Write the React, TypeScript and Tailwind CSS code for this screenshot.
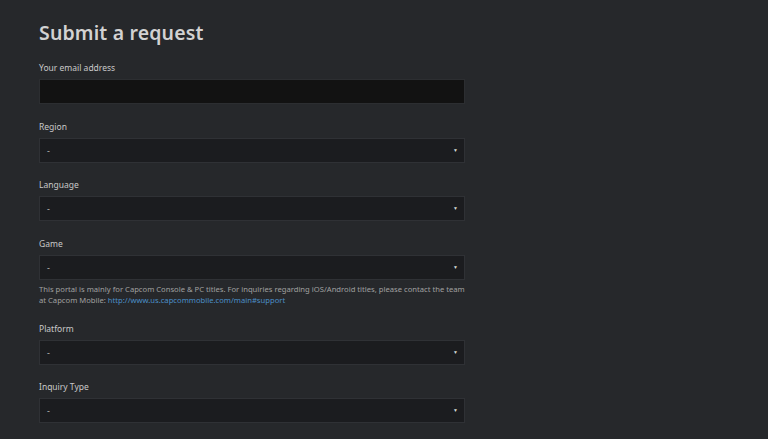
const fields = [
    { label: 'Region' },
    { label: 'Language' },
    { label: 'Game', note: true },
    { label: 'Platform' },
    { label: 'Inquiry Type' },
];

const SelectBox = () => (
    <div className="h-[25px] w-full bg-[#1b1c1f] border border-[#2f3135] flex items-center justify-between pl-[7px] pr-[6px]">
        <span className="text-[9px] text-[#bdbdbd] leading-none">-</span>
        <span className="text-[5px] text-[#d6d6d6] leading-none">▼</span>
    </div>
);

const App = () => {
    return (
        <div className="min-h-screen w-full bg-[#26282b] font-['Noto_Sans',sans-serif] text-[#c9c9c9]">
            <div className="w-[426px] ml-[39px] pt-[19px]">
                <h1 className="text-[19.5px] font-semibold text-[#d2d2d2] leading-[28px] tracking-[0.15px]">Submit a request</h1>

                {/* Email */}
                <div className="mt-[15px]">
                    <label className="block text-[8.5px] leading-[12px]">Your email address</label>
                    <div className="mt-[5px] h-[25px] w-full bg-[#121212] border border-[#2c2e31]" />
                </div>

                {fields.map((f) => (
                    <div key={f.label} className={f.label === 'Platform' ? 'mt-[17px]' : 'mt-[16.5px]'}>
                        <label className="block text-[8.5px] leading-[12px]">{f.label}</label>
                        <div className="mt-[5px]">
                            <SelectBox />
                        </div>
                        {f.note && (
                            <p className="mt-[4px] text-[7.65px] leading-[11px] text-[#a0a0a0] whitespace-nowrap">
                                This portal is mainly for Capcom Console &amp; PC titles. For inquiries regarding iOS/Android titles, please contact the team
                                <br />
                                at Capcom Mobile:{' '}
                                <a className="text-[#4b8fc8]">http://www.us.capcommobile.com/main#support</a>
                            </p>
                        )}
                    </div>
                ))}
            </div>
        </div>
    );
};

export default App;
